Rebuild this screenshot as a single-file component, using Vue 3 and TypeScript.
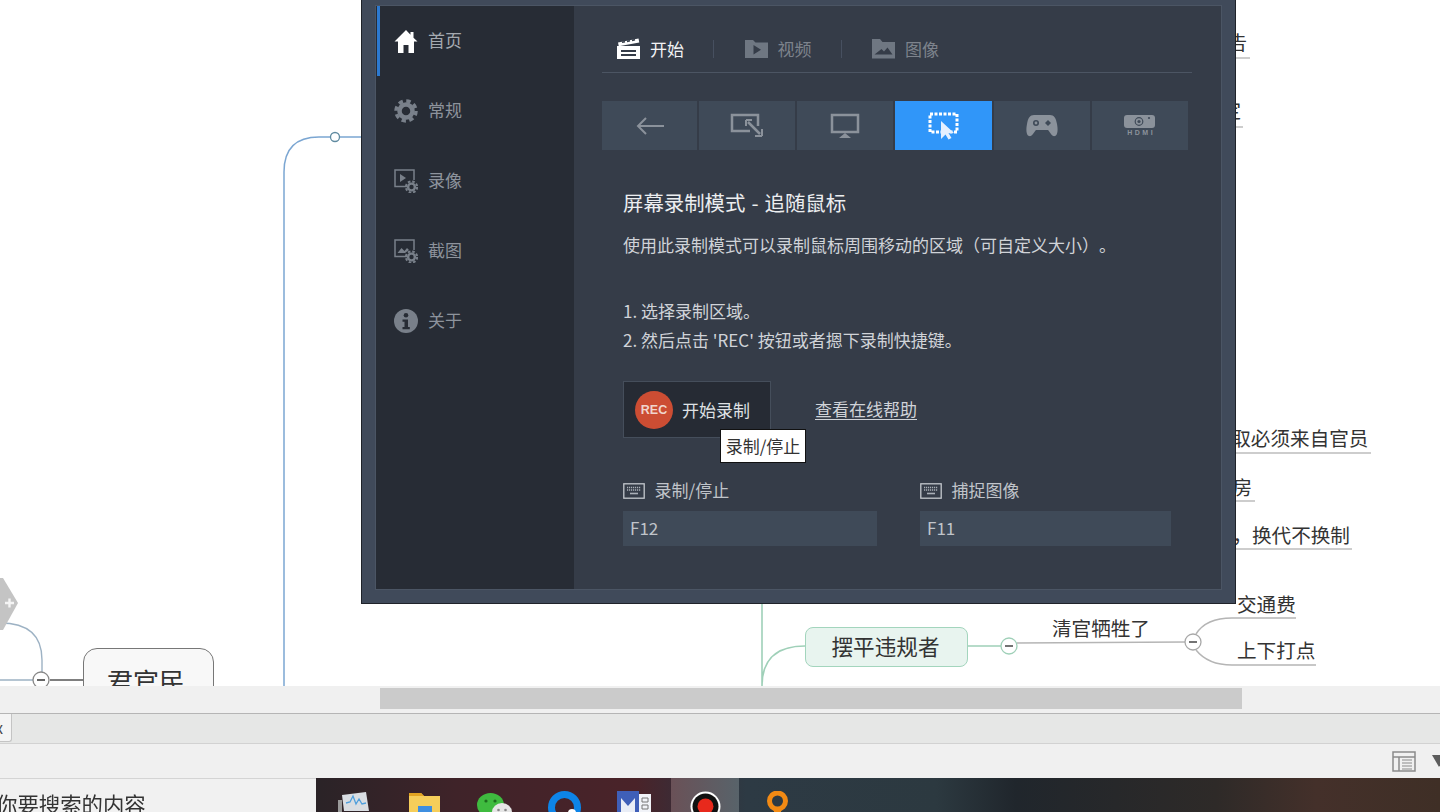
<template>
    <div class="screen">
        <div class="canvas">
            <!-- mind map behind the recorder window -->
            <svg class="map-lines" width="1440" height="686" viewBox="0 0 1440 686" fill="none">
                <path d="M284 686V172Q284 137 319 137H361" stroke="#7ba6d2" stroke-width="1.5" />
                <circle cx="335" cy="137" r="4.5" fill="#fff" stroke="#5f8aa0" stroke-width="1.3" />
                <path d="M762 603V686M762 686Q762 646 805 646M967 646H1001" stroke="#9fd0b8" stroke-width="1.6" />
                <circle cx="1009" cy="646" r="8" fill="#fff" stroke="#9fd0b8" stroke-width="1.3" />
                <path d="M1005 646H1013" stroke="#444" stroke-width="1.5" />
                <path d="M1017 643L1185 642" stroke="#b5b5b5" stroke-width="1.5" />
                <circle cx="1193" cy="642" r="8" fill="#fff" stroke="#a8a8a8" stroke-width="1.3" />
                <path d="M1189 642H1197" stroke="#444" stroke-width="1.5" />
                <path d="M1196 634Q1206 618 1232 618H1296M1196 650Q1208 665 1232 665H1316" stroke="#b5b5b5" stroke-width="1.5" />
                <path d="M1235 58H1250M1235 127H1243M1235 453H1371M1235 501H1255M1235 549H1352" stroke="#bdbdbd" stroke-width="1.5" />
                <path d="M0 623Q42 623 42 660V672M0 680H33" stroke="#9db2c4" stroke-width="1.4" />
                <path d="M50 680H83" stroke="#555" stroke-width="1.3" />
                <circle cx="41" cy="680" r="8" fill="#fff" stroke="#888" stroke-width="1.3" />
                <path d="M37 680H45" stroke="#333" stroke-width="1.5" />
                <path d="M0 578H3L18 603L3 630H0Z" fill="#c4c4c4" />
                <path d="M5 603H14M9.5 598.500V607.500" stroke="#f4f4f4" stroke-width="2.400" />
            </svg>
            <div class="topic topic--jun">君官民</div>
            <div class="topic topic--bai">摆平违规者</div>
            <span
                v-for="label in labels"
                :key="label.text"
                class="map-label"
                :style="{ left: `${label.x}px`, top: `${label.y}px` }"
            >{{ label.text }}</span>

            <div class="recorder">
                <div class="recorder__panel">
                    <nav class="side">
                        <div class="side__item side__item--active">
                            <svg width="24" height="24" viewBox="0 0 24 24" fill="#fff"><path d="M12 1 .5 12.500H4V24h5.500v-8h5v8H20V12.500h3.500L19.500 8.700V3h-3v2.800z" /></svg>
                            <span>首页</span>
                        </div>
                        <div class="side__item">
                            <svg width="24" height="24" viewBox="0 0 24 24" fill="none" stroke="#79808a">
                                <circle cx="12" cy="12" r="6.500" stroke-width="4.500" />
                                <circle cx="12" cy="12" r="10" stroke-width="3.500" stroke-dasharray="4.400 3.450" />
                            </svg>
                            <span>常规</span>
                        </div>
                        <div class="side__item">
                            <svg width="24" height="24" viewBox="0 0 24 24" fill="none" stroke="#79808a">
                                <path d="M13 17.500H1V1h19v10" stroke-width="1.500" />
                                <path d="M6 5l6 4-6 4z" fill="#79808a" stroke="none" />
                                <circle cx="17.500" cy="18" r="3.400" stroke-width="2.400" />
                                <circle cx="17.500" cy="18" r="5.600" stroke-width="2" stroke-dasharray="2.600 1.800" />
                            </svg>
                            <span>录像</span>
                        </div>
                        <div class="side__item">
                            <svg width="24" height="24" viewBox="0 0 24 24" fill="none" stroke="#79808a">
                                <path d="M13 17.500H1V1h19v10" stroke-width="1.500" />
                                <path d="M3.500 14l4-5 3 3 2.500-3 2 2-4 3z" fill="#79808a" stroke="none" />
                                <circle cx="17.500" cy="18" r="3.400" stroke-width="2.400" />
                                <circle cx="17.500" cy="18" r="5.600" stroke-width="2" stroke-dasharray="2.600 1.800" />
                            </svg>
                            <span>截图</span>
                        </div>
                        <div class="side__item">
                            <svg width="24" height="24" viewBox="0 0 24 24"><circle cx="12" cy="12" r="12" fill="#79808a" /><circle cx="12" cy="6.200" r="2.300" fill="#272c35" /><path d="M8.500 10.500H14V18h1.800v2.200H8.500V18h2v-5.300h-2z" fill="#272c35" /></svg>
                            <span>关于</span>
                        </div>
                    </nav>

                    <main class="main">
                        <div class="tabs">
                            <div class="tab tab--active">
                                <svg width="23" height="21" viewBox="0 0 23 21" fill="#fff">
                                    <path d="M0 8h23v13H0zM4 12h15v2H4zM4 16h15v2H4z" fill-rule="evenodd" />
                                    <path d="M1 4.500 21.500 .5l.8 4L1.800 8.300z" />
                                    <path d="M5 4.300l3-.6M10 3.400l3-.6M15 2.400l3-.6" stroke="#353c48" stroke-width="1.600" />
                                </svg>
                                <span>开始</span>
                            </div>
                            <i class="tab-sep" />
                            <div class="tab">
                                <svg width="23" height="20" viewBox="0 0 23 20" fill="#6f7782"><path d="M0 1h8l2.500 2.500H23V19H0zM8.500 6v9.500L16 10.700z" fill-rule="evenodd" /></svg>
                                <span>视频</span>
                            </div>
                            <i class="tab-sep" />
                            <div class="tab">
                                <svg width="23" height="20" viewBox="0 0 23 20" fill="#6f7782"><path d="M0 0h8l2.500 3H23v16.500H0zM2.500 15.500h18l-5-7-3.500 4-2.500-2.500z" fill-rule="evenodd" /></svg>
                                <span>图像</span>
                            </div>
                        </div>

                        <div class="modes">
                            <button class="mode">
                                <svg width="30" height="20" viewBox="0 0 30 20" fill="none" stroke="#8b929b" stroke-width="2"><path d="M29 10H3M11 2l-8 8 8 8" /></svg>
                            </button>
                            <button class="mode">
                                <svg width="34" height="26" viewBox="0 0 34 26" fill="none" stroke="#8b929b" stroke-width="2.500"><path d="M20 18H2V2h26v11" /><path d="M18 9l12 12" /><path d="M16 7h6M16 7v6M32 23h-7M32 23v-7" stroke-width="2" /></svg>
                            </button>
                            <button class="mode">
                                <svg width="30" height="26" viewBox="0 0 30 26" fill="none" stroke="#8b929b" stroke-width="2.500"><path d="M2 2h26v17H2z" /><path d="M15 20l6 5H9z" fill="#8b929b" stroke="none" /></svg>
                            </button>
                            <button class="mode mode--active">
                                <svg width="32" height="28" viewBox="0 0 32 28" fill="none"><path d="M2 2h27v18H2z" stroke="#fff" stroke-width="3" stroke-dasharray="3 1.500" /><path d="M13 9v18l4.500-4.500 3 5 3-1.500-3-5H26z" fill="#e4f0ff" /></svg>
                            </button>
                            <button class="mode">
                                <svg width="32" height="24" viewBox="0 0 32 24" fill="#8b929b"><path d="M8 1h16c4 0 6 3 7 9 1 5 1 11-2 12-3 1-5-4-7-6H10c-2 2-4 7-7 6-3-1-3-7-2-12C2 4 4 1 8 1z" /><circle cx="10" cy="9" r="3" fill="#3f4a58" /><circle cx="10" cy="9" r="1.400" fill="#8b929b" /><path d="M22 6l3 3-3 3-3-3z" fill="#3f4a58" /></svg>
                            </button>
                            <button class="mode">
                                <span class="hdmi">
                                    <svg width="31" height="13" viewBox="0 0 31 13"><rect width="31" height="13" rx="3" fill="#8b929b" /><circle cx="15" cy="6.500" r="3.800" fill="none" stroke="#3f4a58" stroke-width="1.200" /><circle cx="15" cy="6.500" r="1.600" fill="#3f4a58" /><circle cx="25" cy="3" r="1.100" fill="#3f4a58" /></svg>
                                    <em>HDMI</em>
                                </span>
                            </button>
                        </div>

                        <div class="body">
                            <h2 class="body__title">屏幕录制模式 - 追随鼠标</h2>
                            <p class="body__desc">使用此录制模式可以录制鼠标周围移动的区域（可自定义大小）。</p>
                            <ol class="steps">
                                <li>1. 选择录制区域。</li>
                                <li>2. 然后点击 'REC' 按钮或者摁下录制快捷键。</li>
                            </ol>

                            <div class="rec-row">
                                <div class="rec-btn">
                                    <span class="rec-btn__dot">REC</span>
                                    <span>开始录制</span>
                                </div>
                                <a class="rec-help">查看在线帮助</a>
                                <div class="tooltip">录制/停止</div>
                            </div>

                            <div class="keys">
                                <div v-for="key in hotkeys" :key="key.label" class="keys__col" :class="key.cls">
                                    <div class="keys__label">
                                        <svg width="22" height="16" viewBox="0 0 22 16" fill="none"><rect x=".8" y=".8" width="20.400" height="14.400" stroke="#c4c8ce" stroke-width="1.300" /><path d="M4 4.500h14M4 7h14" stroke="#aab0b8" stroke-width="1.500" stroke-dasharray="1.200 .8" /><path d="M7 10.500h8" stroke="#aab0b8" stroke-width="1.600" /></svg>
                                        <span>{{ key.label }}</span>
                                    </div>
                                    <div class="keys__field">{{ key.value }}</div>
                                </div>
                            </div>
                        </div>
                    </main>
                </div>
            </div>
        </div>

        <div class="scroll"><div class="scroll__thumb" /></div>
        <div class="sheet-tabs"><div class="sheet-tabs__tab">x</div></div>
        <div class="toolbar">
            <svg width="24" height="21" viewBox="0 0 24 21" fill="none" stroke="#8a8a8a" stroke-width="1.500"><path d="M1 1h22v19H1zM1 6h22M7 6v14" /><path d="M10 9h10M10 12h10M10 15h10M10 18h10" stroke-width="1.200" /></svg>
            <i class="toolbar__arrow" />
        </div>
        <div class="bottom">
            <div class="search"><span>你要搜索的内容</span></div>
            <div class="taskbar">
                <svg class="task task--monitor" width="31" height="22" viewBox="0 0 31 22"><path d="M4 3 28 0l3 19H6z" fill="#d9dde2" /><path d="M0 8h4v14H0z" fill="#9a9a9a" /><path d="M8 11l4-1 3-6 3 8 3-5 3 5 4-1" fill="none" stroke="#4f9fdc" stroke-width="1.300" /></svg>
                <svg class="task task--folder" width="31" height="22" viewBox="0 0 31 22"><path d="M0 0h12l3 3h16v19H0z" fill="#f6ce5a" /><path d="M0 0h12l3 3H0z" fill="#e2a422" /><rect x="9" y="13" width="14" height="9" fill="#3f8fe0" /></svg>
                <svg class="task task--wechat" width="35" height="22" viewBox="0 0 35 22"><ellipse cx="13.500" cy="13" rx="13.500" ry="12" fill="#3fbb3f" /><ellipse cx="25" cy="20" rx="10" ry="9" fill="#e6e6e6" /><circle cx="9" cy="9" r="1.600" fill="#1d6d1d" /><circle cx="18" cy="9" r="1.600" fill="#1d6d1d" /><circle cx="21.500" cy="18" r="1.300" fill="#888" /><circle cx="28.500" cy="18" r="1.300" fill="#888" /></svg>
                <svg class="task task--q" width="33" height="22" viewBox="0 0 33 22"><circle cx="16.500" cy="16.500" r="13" fill="none" stroke="#0d84e8" stroke-width="7" /><circle cx="24" cy="22" r="4" fill="#fff" /></svg>
                <svg class="task task--visio" width="34" height="22" viewBox="0 0 34 22"><rect x="20" y="3" width="14" height="19" fill="#f1f3f8" /><rect width="22" height="22" fill="#3f5fb8" /><path d="M4 22V7l7 8 7-8v15z" fill="#e9edf6" /><path d="M25 7h6v4h-6zM25 14h6v4h-6z" fill="none" stroke="#777" /></svg>
                <div class="task-active">
                    <svg width="31" height="22" viewBox="0 0 31 22"><circle cx="15.500" cy="15.500" r="15" fill="#fff" /><circle cx="15.500" cy="15.500" r="13" fill="#111" /><circle cx="15.500" cy="15.500" r="8" fill="#e8291c" /></svg>
                </div>
                <svg class="task task--orange" width="25" height="22" viewBox="0 0 25 22"><circle cx="12.500" cy="10" r="8" fill="none" stroke="#f28a14" stroke-width="5" /><path d="M9 18h7v4H9z" fill="#f28a14" /></svg>
            </div>
        </div>
    </div>
</template>

<script setup lang="ts">
const labels = [
    { text: '广告', x: 1208, y: 28 },
    { text: '决定', x: 1202, y: 96 },
    { text: '录取必须来自官员', x: 1211.7, y: 424 },
    { text: '住房', x: 1212.8, y: 473 },
    { text: '制，换代不换制', x: 1212.8, y: 521 },
    { text: '交通费', x: 1237, y: 590 },
    { text: '清官牺牲了', x: 1052, y: 614 },
    { text: '上下打点', x: 1237, y: 636 },
];

const hotkeys = [
    { label: '录制/停止', value: 'F12', cls: 'keys__col--rec' },
    { label: '捕捉图像', value: 'F11', cls: 'keys__col--cap' },
];
</script>

<style>
body { margin: 0; background: #fff; }
</style>

<style scoped>
.screen {
    display: flex; flex-direction: column;
    width: 1440px; height: 812px; overflow: hidden;
    font-family: "Noto Sans CJK SC", "Noto Sans", sans-serif;
    text-spacing-trim: space-all;
    filter: blur(0.35px);
}

.canvas { position: relative; height: 686px; overflow: hidden; background: #fff; flex-shrink: 0; }
.map-lines { position: absolute; left: 0; top: 0; }
.map-label { position: absolute; font-size: 19.600px; line-height: 28px; color: #333; white-space: nowrap; }
.topic { position: absolute; box-sizing: border-box; display: flex; justify-content: center; color: #333; }
.topic--jun {
    left: 83px; top: 648px; width: 131px; height: 60px; padding: 14px 5px 0 0;
    background: #f8f8f8; border: 1.5px solid #777; border-radius: 14px;
    font-size: 26px; line-height: 36px;
}
.topic--bai {
    left: 805px; top: 627px; width: 163px; height: 40px; padding: 0 2px 3px 0;
    background: #e8f4ef; border: 1.5px solid #a3d5bd; border-radius: 8px;
    font-size: 21.600px; line-height: 34px; align-items: center;
}

.recorder {
    position: absolute; left: 361px; top: -9px; width: 875px; height: 613px; box-sizing: border-box;
    padding: 13px;
    background: #404a5a; border: 1px solid #1f232a;
}
.recorder__panel { display: flex; height: 100%; border: 1px solid #4b5564; box-sizing: border-box; background: #353c48; }

.side { width: 198px; flex-shrink: 0; background: #272c35; }
.side__item {
    display: flex; align-items: center; gap: 10px; height: 70px; box-sizing: border-box;
    padding-left: 18px; font-size: 17px; color: #8d939c;
}
.side__item span { padding-bottom: 3px; }
.side__item--active { box-shadow: inset 1px 0 0 #272c35, inset 4px 0 0 #2c79d0; color: #a4a9b0; }

.main { flex: 1; padding: 27px 30px 0 28px; min-width: 0; }
.tabs { display: flex; align-items: center; height: 40px; padding-left: 15px; width: 590px; box-sizing: border-box; border-bottom: 1px solid #4c5563; font-size: 17px; color: #7d838c; }
.tab { display: flex; align-items: center; gap: 10px; padding-bottom: 8px; }
.tab--active { color: #f2f3f5; }
.tab-sep { width: 1px; height: 18px; margin: 0 30.500px 8px 29px; background: #475060; }

.modes { display: flex; gap: 2px; width: 586px; margin-top: 28px; }
.mode {
    flex: 1; display: flex; align-items: center; justify-content: center;
    height: 49px; padding: 0; border: 0; background: #3f4a58;
}
.mode:first-child { flex: 0 0 95px; }
.mode--active { background: #3096f9; }
.hdmi { display: flex; flex-direction: column; align-items: center; }
.hdmi em { font-style: normal; font-size: 7px; line-height: 9px; letter-spacing: 2.500px; margin-right: -2.500px; font-weight: 700; color: #8b929b; font-family: "Liberation Sans", sans-serif; }

.body { padding-left: 21px; color: #d0d3d8; font-size: 17px; }
.body__title { margin: 38px 0 0; font-size: 20.400px; font-weight: 400; line-height: 28px; word-spacing: 1.500px; color: #eceef0; }
.body__desc { margin: 15px 0 0; line-height: 28px; white-space: nowrap; }
.steps { list-style: none; margin: 37px 0 0; padding: 0; line-height: 29px; }

.rec-row { position: relative; display: flex; align-items: center; margin-top: 27px; }
.rec-btn {
    display: flex; align-items: center; gap: 9px; box-sizing: border-box;
    width: 148px; height: 57px; padding-left: 11px;
    background: #262b34; border: 1px solid #454e5b; color: #dfe1e4;
}
.rec-btn__dot {
    display: flex; align-items: center; justify-content: center;
    width: 38px; height: 38px; border-radius: 50%;
    background: #cc4d33; color: #f0d5cd; font-size: 12.500px; font-weight: 700;
    font-family: "Liberation Sans", sans-serif;
}
.rec-help { margin: 0 0 2px 44px; color: #d0d3d8; text-decoration: underline; text-underline-offset: 3px; }
.tooltip {
    position: absolute; left: 97px; top: 48px; box-sizing: border-box;
    width: 86px; height: 34px; background: #fff; border: 1px solid #111;
    color: #333; font-size: 17px; line-height: 32px; text-align: center;
}

.keys { display: flex; margin-top: 41px; }
.keys__col--rec { width: 254px; margin-right: 43px; }
.keys__col--cap { width: 251px; }
.keys__label { display: flex; align-items: center; gap: 9.500px; height: 24px; color: #c0c4ca; }
.keys__label span { padding-bottom: 3px; }
.keys__field {
    height: 35px; margin-top: 8px; padding-left: 7px;
    background: #3f4a58; color: #c0c4ca; line-height: 33px;
}

.scroll { height: 27px; background: #f0f0f0; flex-shrink: 0; }
.scroll__thumb { width: 862px; height: 21px; margin-left: 380px; transform: translateY(2px); background: #cbcbcb; }

.sheet-tabs { height: 31px; box-sizing: border-box; background: #e6e7e6; border-top: 1px solid #b5b5b5; border-bottom: 1px solid #d2d2d2; flex-shrink: 0; }
.sheet-tabs__tab {
    box-sizing: border-box; display: flex; align-items: center; justify-content: flex-end;
    width: 12px; height: 28px; padding-right: 8px; overflow: hidden;
    background: #f4f4f4; border: 1px solid #c4c4c4; border-width: 0 1px 1px 0; border-radius: 0 0 3px 0;
    font-size: 15px; color: #444;
}

.toolbar {
    display: flex; align-items: center; justify-content: flex-end; gap: 16px;
    height: 34px; background: #f0f0f0; flex-shrink: 0;
}
.toolbar__arrow { width: 0; height: 0; margin-right: -6px; border: 7px solid transparent; border-top: 12px solid #5c5c5c; border-bottom: 0; }

.bottom { display: flex; height: 34px; }
.search {
    width: 316px; box-sizing: border-box; background: #f1f1f1; border-top: 1px solid #d4d4d4;
    overflow: hidden; font-size: 21.400px; line-height: 50px; color: #333; white-space: nowrap;
}
.search span { display: block; margin-left: -4px; }
.taskbar {
    position: relative; flex: 1; overflow: hidden;
    background: linear-gradient(90deg, #2a2327 0, #3f2329 140px, #4a2329 320px, #3e2a33 354px, #2d3a44 430px, #2c3940 620px, #20262c 700px, #2e2a28 900px, #44302a 1000px, #3f2f26 1124px);
}
/* taskbar icons sit at fixed slots, cut off by the bottom of the frame */
.task { position: absolute; top: 14px; }
.task--monitor { left: 22px; }
.task--folder { left: 93px; top: 15px; }
.task--wechat { left: 161px; top: 14px; }
.task--q { left: 232px; top: 13px; }
.task--visio { left: 301px; top: 13px; }
.task--orange { left: 449px; top: 13px; }
.task-active {
    position: absolute; left: 355px; top: 0; width: 68px; height: 34px;
    display: flex; justify-content: center; padding-top: 13px; box-sizing: border-box;
    background: linear-gradient(90deg, #6a5157, #58636a);
}
</style>
